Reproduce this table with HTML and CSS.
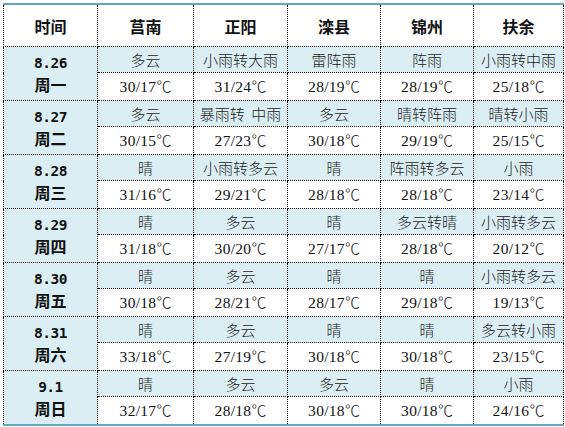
FILE: index.html
```html
<!DOCTYPE html>
<html lang="zh">
<head>
<meta charset="utf-8">
<title>天气预报</title>
<link rel="stylesheet" href="styles.css">
</head>
<body>
<table class="wx">
  <colgroup>
    <col class="c0"><col class="c1"><col class="c2"><col class="c3"><col class="c4"><col class="c5">
  </colgroup>
  <thead>
    <tr class="head"><th>时间</th><th>莒南</th><th>正阳</th><th>滦县</th><th>锦州</th><th>扶余</th></tr>
  </thead>
  <tbody>
    <tr class="w"><td class="date" rowspan="2"><span class="d">8.26</span><span class="wk">周一</span></td><td>多云</td><td>小雨转大雨</td><td>雷阵雨</td><td>阵雨</td><td>小雨转中雨</td></tr>
    <tr class="t"><td>30/17<span class="deg">℃</span></td><td>31/24<span class="deg">℃</span></td><td>28/19<span class="deg">℃</span></td><td>28/19<span class="deg">℃</span></td><td>25/18<span class="deg">℃</span></td></tr>
    <tr class="w"><td class="date" rowspan="2"><span class="d">8.27</span><span class="wk">周二</span></td><td>多云</td><td>暴雨转&nbsp;&nbsp;中雨</td><td>多云</td><td>晴转阵雨</td><td>晴转小雨</td></tr>
    <tr class="t"><td>30/15<span class="deg">℃</span></td><td>27/23<span class="deg">℃</span></td><td>30/18<span class="deg">℃</span></td><td>29/19<span class="deg">℃</span></td><td>25/15<span class="deg">℃</span></td></tr>
    <tr class="w"><td class="date" rowspan="2"><span class="d">8.28</span><span class="wk">周三</span></td><td>晴</td><td>小雨转多云</td><td>晴</td><td>阵雨转多云</td><td>小雨</td></tr>
    <tr class="t"><td>31/16<span class="deg">℃</span></td><td>29/21<span class="deg">℃</span></td><td>28/18<span class="deg">℃</span></td><td>28/18<span class="deg">℃</span></td><td>23/14<span class="deg">℃</span></td></tr>
    <tr class="w"><td class="date" rowspan="2"><span class="d">8.29</span><span class="wk">周四</span></td><td>晴</td><td>多云</td><td>晴</td><td>多云转晴</td><td>小雨转多云</td></tr>
    <tr class="t"><td>31/18<span class="deg">℃</span></td><td>30/20<span class="deg">℃</span></td><td>27/17<span class="deg">℃</span></td><td>28/18<span class="deg">℃</span></td><td>20/12<span class="deg">℃</span></td></tr>
    <tr class="w"><td class="date" rowspan="2"><span class="d">8.30</span><span class="wk">周五</span></td><td>晴</td><td>多云</td><td>晴</td><td>晴</td><td>小雨转多云</td></tr>
    <tr class="t"><td>30/18<span class="deg">℃</span></td><td>28/21<span class="deg">℃</span></td><td>28/17<span class="deg">℃</span></td><td>29/18<span class="deg">℃</span></td><td>19/13<span class="deg">℃</span></td></tr>
    <tr class="w"><td class="date" rowspan="2"><span class="d">8.31</span><span class="wk">周六</span></td><td>晴</td><td>多云</td><td>晴</td><td>晴</td><td>多云转小雨</td></tr>
    <tr class="t"><td>33/18<span class="deg">℃</span></td><td>27/19<span class="deg">℃</span></td><td>30/18<span class="deg">℃</span></td><td>30/18<span class="deg">℃</span></td><td>23/15<span class="deg">℃</span></td></tr>
    <tr class="w"><td class="date" rowspan="2"><span class="d">9.1</span><span class="wk">周日</span></td><td>晴</td><td>多云</td><td>多云</td><td>晴</td><td>小雨</td></tr>
    <tr class="t"><td>32/17<span class="deg">℃</span></td><td>28/18<span class="deg">℃</span></td><td>30/18<span class="deg">℃</span></td><td>30/18<span class="deg">℃</span></td><td>24/16<span class="deg">℃</span></td></tr>
  </tbody>
</table>
</body>
</html>
```
FILE: styles.css
```css
html, body {
  margin: 0;
  padding: 0;
  background: #ffffff;
}
body {
  padding: 3px 0 0 3px;
}
.wx {
  border-collapse: collapse;
  table-layout: fixed;
  width: 560px;
  border-top: 2px solid #5fa9bb;
  border-bottom: 2px solid #5fa9bb;
  border-left: 1px dotted #000;
  border-right: 1px dotted #000;
  font-family: "Liberation Serif", "Noto Sans CJK SC", serif;
  color: #111;
}
.c0 { width: 94px; }
.c1 { width: 96px; }
.c2 { width: 94px; }
.c3 { width: 93px; }
.c4 { width: 93px; }
.c5 { width: 90px; }
.wx th, .wx td {
  border: 1px dotted #000;
  padding: 0;
  text-align: center;
  vertical-align: middle;
  overflow: hidden;
  white-space: nowrap;
}
.head th {
  height: 41px;
  font-family: "Noto Sans CJK SC", sans-serif;
  font-weight: bold;
  font-size: 16px;
  background: #ffffff;
  border-top: none;
}
.w td {
  height: 25px;
  background: #daeef3;
  font-family: "Noto Sans CJK SC", sans-serif;
  font-weight: 300;
  font-size: 15px;
  line-height: 20px;
  color: #1a1a1a;
}
.t td {
  height: 27px;
  background: #ffffff;
  font-size: 15.5px;
  letter-spacing: 0.3px;
  line-height: 20px;
}
.deg {
  font-family: "Noto Sans CJK SC", sans-serif;
  font-weight: 300;
  font-size: 15px;
  letter-spacing: 0;
}
.w td.date {
  background: #daeef3;
  font-weight: bold;
  font-size: 16px;
  line-height: 21px;
  color: #111;
}
.date .d {
  display: block;
  font-family: "DejaVu Sans Mono", monospace;
  font-size: 14.5px;
  letter-spacing: -0.5px;
}
.date .wk {
  display: block;
  font-family: "Noto Sans CJK SC", sans-serif;
}
```
